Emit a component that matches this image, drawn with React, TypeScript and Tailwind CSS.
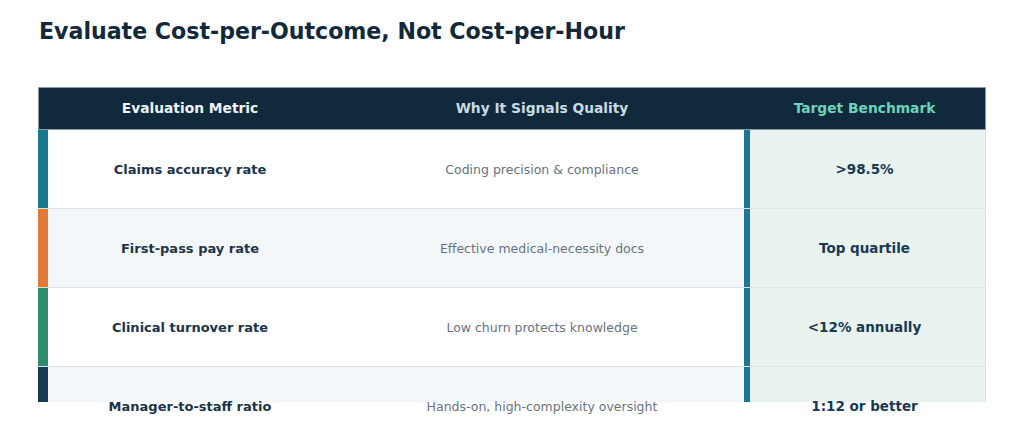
const rows = [
  {
    metric: "Claims accuracy rate",
    why: "Coding precision & compliance",
    target: ">98.5%",
    accent: "bg-[#17788e]",
    alt: false,
  },
  {
    metric: "First-pass pay rate",
    why: "Effective medical-necessity docs",
    target: "Top quartile",
    accent: "bg-[#e07b39]",
    alt: true,
  },
  {
    metric: "Clinical turnover rate",
    why: "Low churn protects knowledge",
    target: "<12% annually",
    accent: "bg-[#2e8b6e]",
    alt: false,
  },
  {
    metric: "Manager-to-staff ratio",
    why: "Hands-on, high-complexity oversight",
    target: "1:12 or better",
    accent: "bg-[#173d56]",
    alt: true,
  },
];

export default function App() {
  return (
    <div
      className="w-[1024px] h-[422px] bg-white overflow-hidden"
      style={{ fontFamily: '"DejaVu Sans", Verdana, sans-serif' }}
    >
      <h1 className="pl-[39px] pt-[17px] text-[22.1px] leading-[28px] font-bold text-[#12293b]">
        Evaluate Cost-per-Outcome, Not Cost-per-Hour
      </h1>

      <div className="ml-[38px] mt-[42px] w-[948px]">
        {/* header */}
        <div className="flex h-[43px] bg-[#102a3c] border border-[#8a9aa6] text-[13.8px] font-bold">
          <div className="w-[9px]" />
          <div className="w-[284px] flex items-center justify-center text-[#eef3f6]">
            Evaluation Metric
          </div>
          <div className="w-[412px] pl-[8px] flex items-center justify-center text-[#c9dbe4]">
            Why It Signals Quality
          </div>
          <div className="w-[6px]" />
          <div className="flex-1 pr-[6px] flex items-center justify-center text-[#6fd3b8]">
            Target Benchmark
          </div>
        </div>

        {/* body */}
        {rows.map((r, i) => {
          const last = i === rows.length - 1;
          return (
            <div
              key={r.metric}
              className={`flex ${last ? "h-[35px]" : "h-[79px] border-b border-[#dde5ec]"} ${
                r.alt ? "bg-[#f3f7fa]" : "bg-white"
              }`}
            >
              <div className={`w-[10px] ${r.accent}`} />
              <div className="w-[284px] relative">
                <div className="absolute inset-x-0 top-0 h-[79px] flex items-center justify-center text-[13px] font-bold text-[#1b3447]">
                  {r.metric}
                </div>
              </div>
              <div className="w-[412px] relative">
                <div className="absolute left-[8px] right-0 top-0 pt-[2px] h-[79px] flex items-center justify-center text-[12.5px] text-[#68737d]">
                  {r.why}
                </div>
              </div>
              <div className="w-[6px] bg-[#17788e]" />
              <div className="flex-1 relative bg-[#e8f3ef] border-r border-[#d6e6df]">
                <div className="absolute left-0 right-[6px] top-0 h-[79px] flex items-center justify-center text-[13.5px] font-bold text-[#183a52]">
                  {r.target}
                </div>
              </div>
            </div>
          );
        })}
      </div>
    </div>
  );
}
